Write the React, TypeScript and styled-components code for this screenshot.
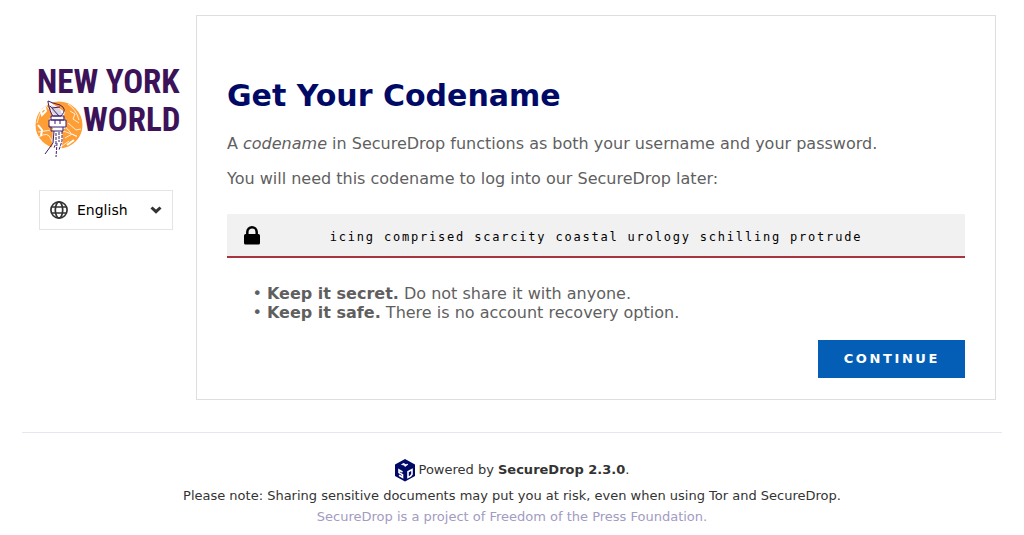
import React from "react";
import styled, { createGlobalStyle } from "styled-components";

const GlobalStyle = createGlobalStyle`
  *, *::before, *::after { box-sizing: border-box; }
  body {
    margin: 0;
    background: #fff;
    color: #5f5f5f;
    font: 16px/19px "DejaVu Sans", sans-serif;
  }
`;

const Page = styled.div`
  max-width: 1024px;
  margin: 0 auto;
  padding: 15px 22px 8px;
`;

const Columns = styled.div`
  display: flex;
  align-items: flex-start;
  padding-right: 6px;
`;

const Sidebar = styled.header`
  flex: 0 0 174px;
  padding: 48px 16px 0 12px;
`;

const LogoLink = styled.a`
  display: block;
  width: 146px;
  color: #3c1259;
  text-decoration: none;
`;

const LogoArt = styled.svg`
  display: block;
  overflow: visible;
`;

const LogoText = styled.text`
  font: bold 33px "Roboto Condensed", "Liberation Sans", sans-serif;
  fill: #3c1259;
`;

const LanguagePicker = styled.label`
  position: relative;
  display: block;
  width: 134px;
  height: 40px;
  margin: 31px 0 0 5px;
`;

const LanguageSelect = styled.select`
  appearance: none;
  width: 100%;
  height: 100%;
  padding: 0 30px 0 37px;
  border: 1px solid #e4e4e4;
  border-radius: 0;
  background: transparent;
  color: #000;
  font: 14px "DejaVu Sans", sans-serif;
`;

const PickerIcon = styled.svg<{ $side: "left" | "right" }>`
  position: absolute;
  top: 0;
  bottom: 0;
  margin: auto 0;
  ${(p) => p.$side}: 11px;
  pointer-events: none;
`;

const Panel = styled.main`
  flex: 1;
  min-width: 0;
  padding: 60px 30px 21px;
  border: 1px solid #dedede;
`;

const Title = styled.h1`
  margin: 0 0 18px;
  color: #000a66;
  font-size: 30px;
  line-height: 40px;
`;

const Paragraph = styled.p`
  margin: 0 0 16px;
`;

const CodenameBox = styled.div`
  display: grid;
  grid-template-columns: 16px 1fr 16px;
  align-items: center;
  height: 44px;
  margin: 26px 0;
  padding: 0 17px;
  border-bottom: 2px solid #a8343f;
  background: #f1f1f1;
`;

const Codename = styled.mark`
  padding-top: 4px;
  background: none;
  color: #000;
  font: 12px/16px "DejaVu Sans Mono", monospace;
  letter-spacing: 0.15em;
  text-align: center;
`;

const Tips = styled.ul`
  margin: 0 0 18px;
  padding-left: 40px;
  list-style-type: "• ";
`;

const Actions = styled.form`
  display: flex;
  justify-content: flex-end;
`;

const PrimaryButton = styled.button`
  height: 38px;
  padding: 0 25px 2px 26px;
  border: 0;
  background: #045eb6;
  color: #fff;
  font: bold 13px "DejaVu Sans", sans-serif;
  letter-spacing: 0.2em;
  text-transform: uppercase;
`;

const Footer = styled.footer`
  margin-top: 32px;
  padding-top: 24px;
  border-top: 1px solid #e6e6ef;
  color: #333;
  font-size: 13px;
  line-height: 21px;
  text-align: center;
`;

const PoweredBy = styled.p`
  display: flex;
  align-items: center;
  justify-content: center;
  gap: 4px;
  margin: 0 0 2px;
  line-height: 26px;
`;

const FooterLine = styled.p`
  margin: 0;
`;

const ProjectLink = styled.a`
  color: #a29bc2;
  text-decoration: none;
`;

function Logo() {
  return (
    <LogoArt width="146" height="96" viewBox="0 0 146 96" role="img" aria-label="New York World">
      <LogoText x="3" y="30">NEW YORK</LogoText>
      <LogoText x="49" y="68">WORLD</LogoText>
      <circle cx="25" cy="62" r="23.500" fill="#ff9e35" />
      <g fill="none" stroke="#fff" strokeWidth=".8">
        <path d="M3 60q3-15 13-20M5 74q9-6 12 2t9 8M34 41q8 5 11 16M36 48l5 3-2 5 6 4M34 60l8 7 5-1M31 75l7-4 5 3M28 83l7-5M4 69l20-3 19 7M12 43l25 27" />
        <path d="M7 48l4-3 1 3-4 4zM4 62l4 5-1 6M33 82l7-5" strokeWidth="2" />
      </g>
      <path d="M14 38l17 11-2 6 3 2v8l-4 2 1 10-3 16-5-4-8 12 5-14 1-22-4-3v-6l4-3z" fill="#fff" />
      <path d="M17 42l9 4 2 5-6 2-4-3z" fill="#d9d3e3" />
      <g fill="none" stroke="#3c1e70" strokeWidth="1">
        <path d="M14 39q2 11 5 14h8q7-7-1-11-8-2-12-4zM16 43l9 10M18 45l8-1M17 53h13v4H17zM15 57h17v7H15zM17 64v4h12v-4M21 57v4M26 57v4" />
        <path d="M20 68l-1 12-8 11" />
        <path d="M28 68v10l-3 9M22 70v10l-2 5M25 69v10M23 80l-1 14" strokeDasharray="3 1" />
      </g>
    </LogoArt>
  );
}

function GlobeIcon() {
  return (
    <PickerIcon $side="left" width="18" height="18" viewBox="0 0 18 18" fill="none" stroke="#333" strokeWidth="1.7" aria-hidden="true">
      <circle cx="9" cy="9" r="8.1" />
      <ellipse cx="9" cy="9" rx="3.7" ry="8.1" />
      <path d="M1.5 6h15M1.5 12h15" />
    </PickerIcon>
  );
}

function ChevronIcon() {
  return (
    <PickerIcon $side="right" width="12" height="8" viewBox="0 0 12 8" aria-hidden="true">
      <path d="M1.5 1.5L6 5.7l4.500-4.200" fill="none" stroke="#333" strokeWidth="3" />
    </PickerIcon>
  );
}

function LockIcon() {
  return (
    <svg width="16" height="20" viewBox="0 0 16 20" aria-hidden="true">
      <path d="M3.300 10V7a4.700 4.700 0 0 1 9.400 0v3" fill="none" stroke="#000" strokeWidth="2.500" />
      <rect y="9" width="16" height="10.500" rx="1.500" />
    </svg>
  );
}

function CubeIcon() {
  return (
    <svg width="20" height="24" viewBox="0 0 20 24" aria-hidden="true">
      <path d="M10 1l10 5.500v11.500l-10 5.500-10-5.500V6.500z" fill="#000a66" />
      <path d="M6.500 6.500L9 5.200l1 1.300 3-.2-3 2.200-1-1.500z" fill="#fff" stroke="#fff" strokeWidth=".7" />
      <path d="M7.500 14L4 12v2.600l3.500 2v2.700L4 17.300" fill="none" stroke="#fff" strokeWidth="1.600" />
      <path d="M13 13.800l4-2.200v4.600l-1.500 1.900-2.500 1.300z" fill="none" stroke="#fff" strokeWidth="1.600" />
    </svg>
  );
}

export default function App() {
  return (
    <>
      <GlobalStyle />
      <Page>
        <Columns>
          <Sidebar>
            <LogoLink href="#"><Logo /></LogoLink>
            <LanguagePicker>
              <GlobeIcon />
              <LanguageSelect aria-label="Language" defaultValue="en">
                <option value="en">English</option>
              </LanguageSelect>
              <ChevronIcon />
            </LanguagePicker>
          </Sidebar>
          <Panel>
            <Title>Get Your Codename</Title>
            <Paragraph>
              A <em>codename</em> in SecureDrop functions as both your username and your password.
            </Paragraph>
            <Paragraph>You will need this codename to log into our SecureDrop later:</Paragraph>
            <CodenameBox>
              <LockIcon />
              <Codename>icing comprised scarcity coastal urology schilling protrude</Codename>
            </CodenameBox>
            <Tips>
              <li><strong>Keep it secret.</strong> Do not share it with anyone.</li>
              <li><strong>Keep it safe.</strong> There is no account recovery option.</li>
            </Tips>
            <Actions>
              <PrimaryButton type="button">Continue</PrimaryButton>
            </Actions>
          </Panel>
        </Columns>
        <Footer>
          <PoweredBy>
            <CubeIcon />
            <span>Powered by <strong>SecureDrop 2.3.0</strong>.</span>
          </PoweredBy>
          <FooterLine>Please note: Sharing sensitive documents may put you at risk, even when using Tor and SecureDrop.</FooterLine>
          <FooterLine>
            <ProjectLink href="#">SecureDrop is a project of Freedom of the Press Foundation.</ProjectLink>
          </FooterLine>
        </Footer>
      </Page>
    </>
  );
}
